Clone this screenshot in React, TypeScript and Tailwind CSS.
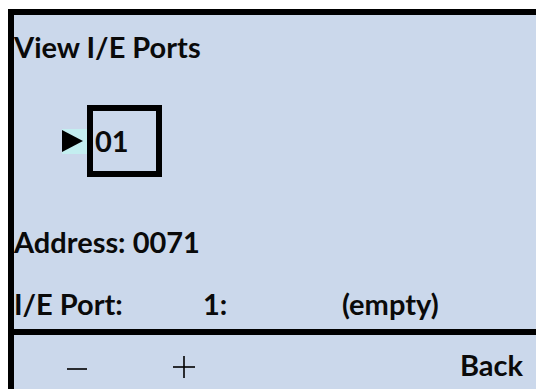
import React from 'react';

const font = { fontFamily: 'Lato, "Liberation Sans", sans-serif' };

// Library panel screen: "View I/E Ports"
const App: React.FC = () => {
  return (
    <div className="w-[536px] h-[389px] bg-white pl-[8px] pt-[9px] overflow-hidden" style={font}>
      <div className="h-[380px] border-l-[6px] border-t-[6px] border-black bg-[#cbd8eb] text-[#0a0a0a] font-bold text-[29px] leading-[28px] flex flex-col">
        {/* Main content */}
        <div className="h-[314px] flex flex-col">
          <div className="pt-[18px]">View I/E Ports</div>

          <div className="mt-[44px] pl-[48px] flex items-center">
            <div className="w-[25px] h-[25px] bg-[#c4eef0] flex items-center">
              <svg width="22" height="24" viewBox="0 0 22 24">
                <polygon points="0,1 21,12 0,23" fill="#000" />
              </svg>
            </div>
            <div className="w-[75px] h-[72px] border-[6px] border-black flex items-center pl-[2px]">
              01
            </div>
          </div>

          <div className="mt-[51px]">Address: 0071</div>

          <div className="mt-[34px] flex">
            <span className="w-[189px]">I/E Port:</span>
            <span className="w-[139px]">1:</span>
            <span>(empty)</span>
          </div>
        </div>

        {/* Soft key bar */}
        <div className="border-t-[6px] border-black h-[60px] flex items-start pt-[16px] pr-[13px]">
          <div className="ml-[53px] mt-[16px]">
            <svg width="20" height="4" viewBox="0 0 20 4">
              <line x1="0" y1="2" x2="20" y2="2" stroke="#000" strokeWidth="1.6" />
            </svg>
          </div>
          <div className="ml-[86px] mt-[5px]">
            <svg width="22" height="22" viewBox="0 0 22 22">
              <line x1="0" y1="11" x2="22" y2="11" stroke="#000" strokeWidth="1.6" />
              <line x1="11" y1="0" x2="11" y2="22" stroke="#000" strokeWidth="1.6" />
            </svg>
          </div>
          <div className="ml-auto">Back</div>
        </div>
      </div>
    </div>
  );
};

export default App;
